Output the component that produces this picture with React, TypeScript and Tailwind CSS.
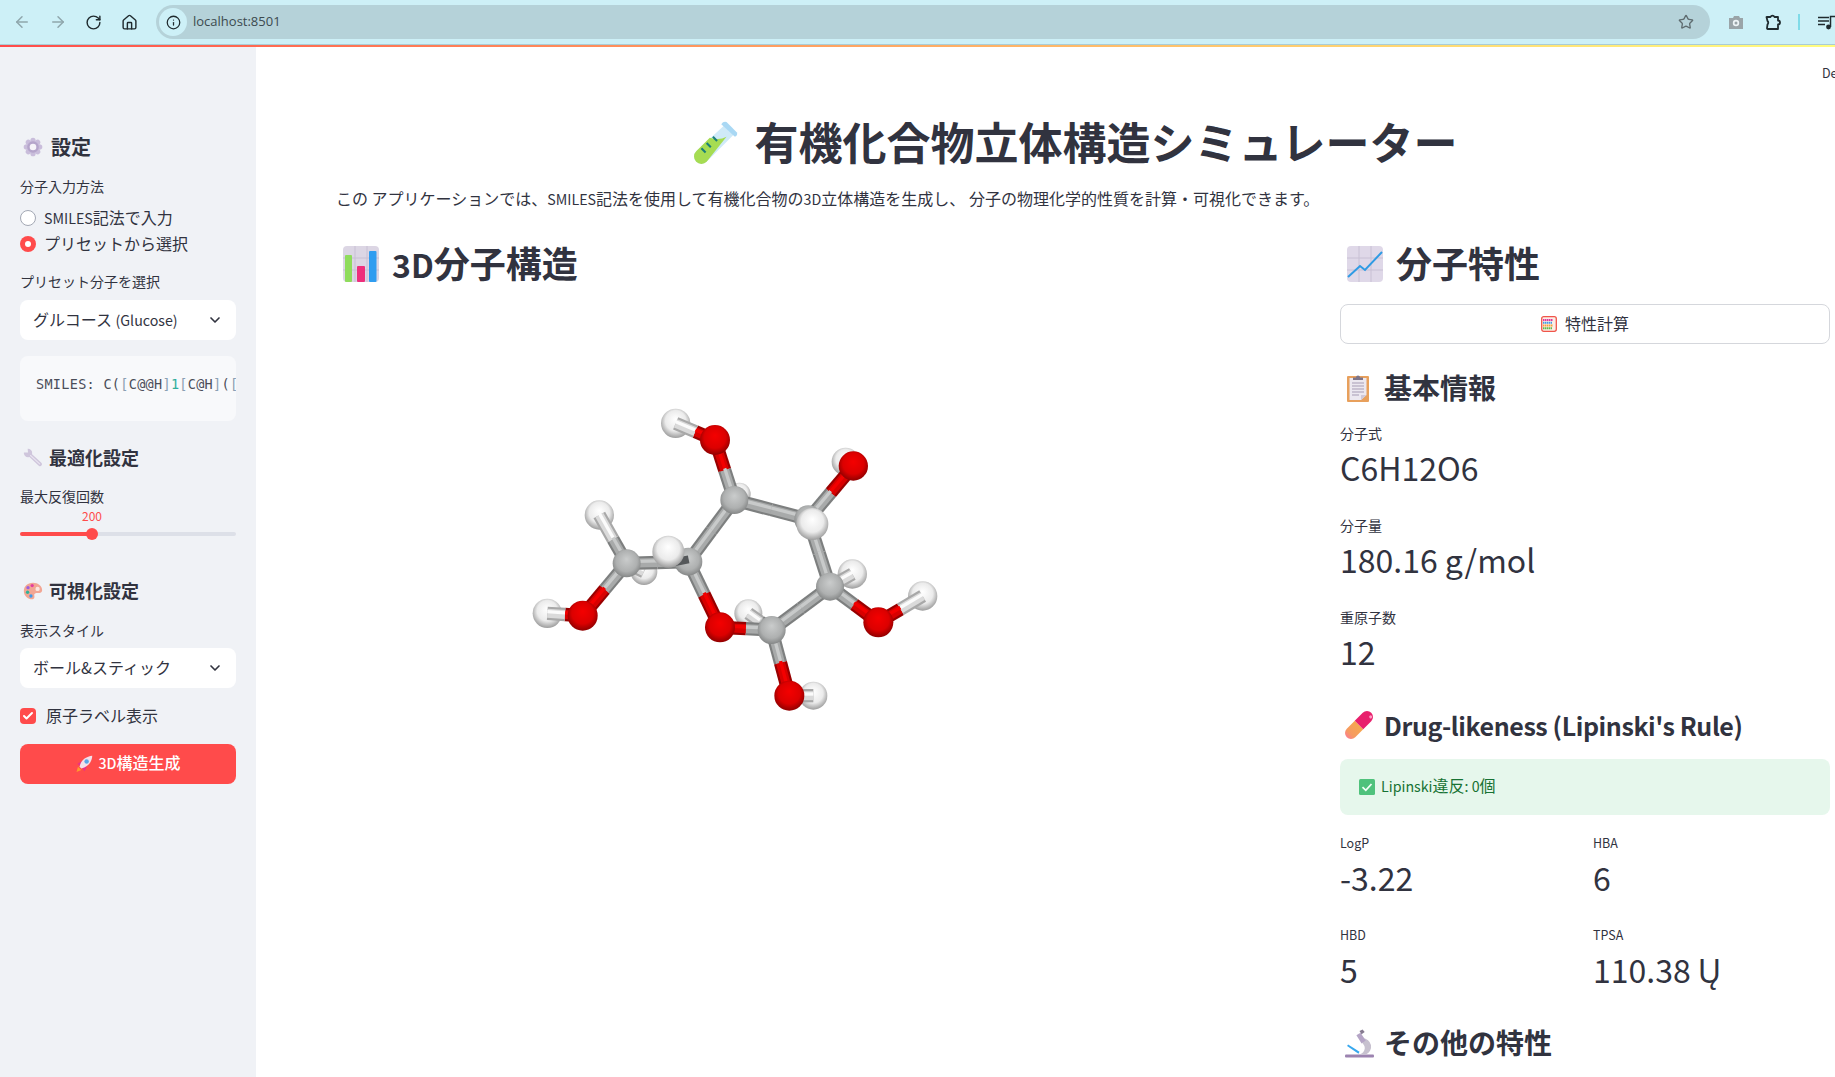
import React from 'react';
import { ArrowLeft, ArrowRight, RotateCw, House, Info, Star, ChevronDown, Check } from 'lucide-react';

// latin runs: the CJK font's latin is wider, so size it down a bit
const L = ({ children }: { children: React.ReactNode }) => <span className="text-[0.89em]">{children}</span>;

const TestTube = ({ className = '' }: { className?: string }) => (
  <svg viewBox="0 0 44 44" className={className}>
    <path d="M32 4 L41 13 L14 40 A6.4 6.4 0 0 1 4 30 Z" fill="#cfeaf8" />
    <path d="M33 16 L14 40 A6.4 6.4 0 0 1 4 30 L17 17 Q26 20 33 16 Z" fill="#a6dc52" />
    <path d="M14 22 l4 4 M9 27 l4 4 M20 16 l4 4" stroke="#1b7f79" strokeWidth="2" />
    <path d="M28 4 Q30 1 33 2 L43 12 Q44 15 41 16 Z" fill="#a9d8f4" />
  </svg>
);

const Gear = ({ className = '' }: { className?: string }) => (
  <svg viewBox="0 0 24 24" className={className}>
    {[0, 45, 90, 135, 180, 225, 270, 315].map((a) => (
      <ellipse key={a} cx="12" cy="4.6" rx="3.2" ry="3.8" fill="#c9bddb" transform={`rotate(${a} 12 12)`} />
    ))}
    <circle cx="12" cy="12" r="7" fill="#b5a5cb" />
    <circle cx="12" cy="12" r="4" fill="#f6f4f9" />
  </svg>
);

const Wrench = ({ className = '' }: { className?: string }) => (
  <svg viewBox="0 0 24 24" className={className}>
    <path d="M8 8 L20.500 19.500" stroke="#cfc6dc" strokeWidth="4.500" strokeLinecap="round" />
    <circle cx="6" cy="6" r="5" fill="#cfc6dc" />
    <path d="M5.500 0 L6 5.500 L0 5.500 L0 0 Z" fill="#f0f2f6" />
    <path d="M9 9 L20 19" stroke="#e9e4f0" strokeWidth="1.300" strokeLinecap="round" />
  </svg>
);

const Palette = ({ className = '' }: { className?: string }) => (
  <svg viewBox="0 0 24 24" className={className}>
    <path d="M12 2 C5 2 1 6.500 1 12 C1 18 6 22 11 22 C14 22 14 19 13.500 17.500 C13 15 15 14.500 18 14.500 C21 14.500 23 13.500 23 11 C23 6 18 2 12 2 Z" fill="#f2a694" />
    <circle cx="17.500" cy="9.500" r="2.600" fill="#fbe6df" />
    <circle cx="11" cy="5.500" r="2" fill="#e23fa0" />
    <circle cx="6" cy="8" r="2" fill="#9a5fe0" />
    <circle cx="5.500" cy="13.500" r="2" fill="#2fb39a" />
    <circle cx="9.500" cy="18" r="2" fill="#3f9ae8" />
  </svg>
);

const Rocket = ({ className = '' }: { className?: string }) => (
  <svg viewBox="0 0 24 24" className={className}>
    <path d="M2 22.500 L4 15.500 L8.500 20 Z" fill="#ff9a2e" />
    <path d="M3 12 L9 8 L8 15 Z M12.500 21.500 L16 15 L9 16 Z" fill="#e8308a" />
    <path d="M6 15.500 C8 7 14 2 23 1 C22.500 10 17 16 8.500 18 Z" fill="#f3dfe9" />
    <circle cx="15.500" cy="8.500" r="3" fill="#5aa6e8" />
  </svg>
);

const BarChart = ({ className = '' }: { className?: string }) => (
  <svg viewBox="0 0 36 36" className={className}>
    <rect x="0" y="0" width="36" height="36" rx="4" fill="#dcd6e4" />
    <path d="M12 0 V36 M24 0 V36 M0 12 H36 M0 24 H36" stroke="#c8c0d4" strokeWidth="1" />
    <rect x="2" y="9" width="7" height="27" rx="1" fill="#8fdc5c" />
    <rect x="14" y="20" width="8" height="16" rx="1" fill="#ee2f7c" />
    <rect x="26" y="5" width="7.500" height="31" rx="1" fill="#2f9df0" />
  </svg>
);

const LineChart = ({ className = '' }: { className?: string }) => (
  <svg viewBox="0 0 36 36" className={className}>
    <rect x="0" y="0" width="36" height="36" rx="4" fill="#dfd8e8" />
    <path d="M12 0 V36 M24 0 V36 M0 12 H36 M0 24 H36" stroke="#c8c0d4" strokeWidth="1" />
    <path d="M1 31 L13 20 L18 24 L35 6" fill="none" stroke="#2f9be4" strokeWidth="2" />
  </svg>
);

const Abacus = ({ className = '' }: { className?: string }) => (
  <svg viewBox="0 0 16 16" className={className}>
    <rect x="0.700" y="0.700" width="14.600" height="14.600" rx="2" fill="#fbeee6" stroke="#f0554a" strokeWidth="1.300" />
    <path d="M2 4 H12" stroke="#e2369a" strokeWidth="2" strokeDasharray="1.500 0.500" />
    <path d="M2 6.800 H11" stroke="#3f9ae8" strokeWidth="2" strokeDasharray="1.500 0.500" />
    <path d="M2 9.500 H12" stroke="#f5a13c" strokeWidth="2" strokeDasharray="1.500 0.500" />
    <path d="M2 12.200 H11" stroke="#5dbb4c" strokeWidth="2" strokeDasharray="1.500 0.500" />
  </svg>
);

const Clipboard = ({ className = '' }: { className?: string }) => (
  <svg viewBox="0 0 22 28" className={className}>
    <rect x="0" y="2" width="22" height="26" rx="1" fill="#e8a05c" />
    <path d="M2.500 4 H19.500 V21 L14 26 H2.500 Z" fill="#ece8f0" />
    <path d="M14 26 L14 21 H19.500 Z" fill="#cfc8d8" />
    <path d="M5 9 H17 M5 12 H17 M5 15 H17 M5 18 H17 M5 21 H12" stroke="#a79cb5" strokeWidth="1" />
    <path d="M6 6 V3.500 H9 A2 2 0 0 1 13 3.500 H16 V6 Z" fill="#7d7488" />
  </svg>
);

const Pill = ({ className = '' }: { className?: string }) => (
  <svg viewBox="0 0 28 28" className={className}>
    <defs>
      <linearGradient id="pill-end" x1="0" y1="0" x2="0" y2="1">
        <stop offset="0%" stopColor="#f5a84e" />
        <stop offset="70%" stopColor="#f69a62" />
        <stop offset="100%" stopColor="#fb7f8e" />
      </linearGradient>
    </defs>
    <g transform="rotate(45 14 14)">
      <path d="M8 14 H20 V25.300 A6 6 0 0 1 8 25.300 Z" fill="url(#pill-end)" />
      <path d="M8 14 H20 V2.700 A6 6 0 0 0 8 2.700 Z" fill="#e8206c" />
      <circle cx="16.500" cy="0" r="1.500" fill="#ff9cc4" />
    </g>
  </svg>
);

const CheckBox = ({ className = '' }: { className?: string }) => (
  <svg viewBox="0 0 16 16" className={className}>
    <rect x="0" y="0" width="16" height="16" rx="1.500" fill="#4fc27c" />
    <path d="M3.500 8.200 L6.800 11.300 L12.500 5" fill="none" stroke="#f4fff8" strokeWidth="1.800" />
  </svg>
);

const Microscope = ({ className = '' }: { className?: string }) => (
  <svg viewBox="0 0 28 28" className={className}>
    <rect x="0" y="24.500" width="28" height="3" rx="1" fill="#9c83b0" />
    <path d="M17 9 A8 8 0 0 1 20 24.500 H13 A6 6 0 0 0 17 14 Z" fill="#c7c1cf" />
    <path d="M2 16.500 L3 15 L14 22 L13 24 Z" fill="#37a8ee" />
    <path d="M11 6 L15 3.500 L20 11 L16 14 Z" fill="#b5a5c6" />
    <path d="M14 2 L17 0.500 L19 3 L16 5 Z" fill="#857a90" />
  </svg>
);

type AtomKind = 'C' | 'O' | 'H';

const bondColors: Record<AtomKind, [string, string, string]> = {
  C: ['#7d7f7f', '#a8aaaa', '#c8caca'],
  O: ['#980000', '#d80000', '#f40000'],
  H: ['#a8a8a8', '#dadada', '#fbfbfb'],
};

const atoms: Record<string, { x: number; y: number; r: number; kind: AtomKind }> = {
  H1: { x: 527, y: 100, r: 44, kind: 'H' },
  O1: { x: 645, y: 150, r: 45, kind: 'O' },
  C1: { x: 703, y: 330, r: 42, kind: 'C' },
  H0: { x: 718, y: 312, r: 34, kind: 'H' },
  O2: { x: 1060, y: 228, r: 44, kind: 'O' },
  H2: { x: 1037, y: 215, r: 42, kind: 'H' },
  H3: { x: 298, y: 375, r: 44, kind: 'H' },
  C2: { x: 380, y: 520, r: 42, kind: 'C' },
  H4: { x: 432, y: 545, r: 40, kind: 'H' },
  H5: { x: 505, y: 485, r: 48, kind: 'H' },
  C3: { x: 565, y: 515, r: 42, kind: 'C' },
  H6: { x: 142, y: 670, r: 44, kind: 'H' },
  O3: { x: 248, y: 677, r: 45, kind: 'O' },
  O4: { x: 660, y: 712, r: 45, kind: 'O' },
  C4: { x: 815, y: 720, r: 42, kind: 'C' },
  H7: { x: 745, y: 670, r: 42, kind: 'H' },
  C5: { x: 990, y: 590, r: 42, kind: 'C' },
  H8: { x: 1057, y: 552, r: 44, kind: 'H' },
  C6: { x: 925, y: 388, r: 42, kind: 'C' },
  H9: { x: 937, y: 402, r: 48, kind: 'H' },
  H10: { x: 1268, y: 618, r: 44, kind: 'H' },
  O5: { x: 1135, y: 697, r: 45, kind: 'O' },
  O6: { x: 868, y: 917, r: 45, kind: 'O' },
  H11: { x: 940, y: 917, r: 42, kind: 'H' },
};

// painted back to front
const scene: string[] = [
  'H0', 'H2', 'H4', 'H7', 'H8', 'H11', 'C2-H4', 'C4-H7', 'C5-H8', 'O2-H2',
  'O6-H11', 'H1', 'O1-H1', 'H3', 'C2-H3', 'H6', 'O3-H6', 'H10', 'O5-H10',
  'C1-O1', 'C6-O2', 'C3-O4', 'C4-O4', 'C4-O6', 'C2-O3', 'C5-O5',
  'O1', 'O2', 'O3', 'O5', 'O6',
  'C2-C3', 'C3-C1', 'C1-C6', 'C6-C5', 'C5-C4',
  'C2', 'C1', 'C6', 'C5', 'C4', 'C3', 'shade', 'O4', 'H5', 'H9',
];

const Bond = ({ a, b }: { a: string; b: string }) => {
  const p = atoms[a];
  const q = atoms[b];
  const mx = (p.x + q.x) / 2;
  const my = (p.y + q.y) / 2;
  const widths = [40, 27, 10];
  return (
    <g strokeLinecap="butt">
      {widths.map((w, i) => {
        const lift = i === 2 ? 5 : 0;
        return (
          <React.Fragment key={w}>
            <line x1={p.x} y1={p.y - lift} x2={mx} y2={my - lift} stroke={bondColors[p.kind][i]} strokeWidth={w} />
            <line x1={mx} y1={my - lift} x2={q.x} y2={q.y - lift} stroke={bondColors[q.kind][i]} strokeWidth={w} />
          </React.Fragment>
        );
      })}
    </g>
  );
};

const Molecule = () => (
  <svg viewBox="0 0 1380 1020" className="w-[460px] h-[340px]">
    <defs>
      <radialGradient id="atom-C" cx="50%" cy="45%" r="58%" fx="50%" fy="35%">
        <stop offset="0%" stopColor="#cacccc" />
        <stop offset="65%" stopColor="#aeb0b0" />
        <stop offset="100%" stopColor="#7f8181" />
      </radialGradient>
      <radialGradient id="atom-O" cx="50%" cy="45%" r="58%" fx="50%" fy="35%">
        <stop offset="0%" stopColor="#f40000" />
        <stop offset="62%" stopColor="#dc0000" />
        <stop offset="100%" stopColor="#860000" />
      </radialGradient>
      <radialGradient id="atom-H" cx="50%" cy="45%" r="58%" fx="50%" fy="35%">
        <stop offset="0%" stopColor="#ffffff" />
        <stop offset="60%" stopColor="#ebebeb" />
        <stop offset="100%" stopColor="#939393" />
      </radialGradient>
    </defs>
    {scene.map((item) => {
      if (item === 'shade') {
        return <line key={item} x1="525" y1="516" x2="566" y2="508" stroke="#55585a" strokeWidth="24" />;
      }
      if (item.includes('-')) {
        const [a, b] = item.split('-');
        return <Bond key={item} a={a} b={b} />;
      }
      const atom = atoms[item];
      return <circle key={item} cx={atom.x} cy={atom.y} r={atom.r} fill={`url(#atom-${atom.kind})`} />;
    })}
  </svg>
);

const BrowserBar = () => (
  <div className="h-[45px] shrink-0 bg-[#cdf0f7] border-b border-[#a9cdd6] flex items-center font-['Open_Sans','Noto_Sans',sans-serif]">
    <div className="w-[156px] shrink-0 flex items-center pl-[13px] gap-[18px]">
      <ArrowLeft size={18} className="text-[#8fa6ac]" />
      <ArrowRight size={18} className="text-[#8fa6ac]" />
      <RotateCw size={17} className="text-[#1f2a2e]" />
      <House size={17} className="ml-[1px] text-[#1f2a2e]" />
    </div>
    <div className="w-[1554px] h-[34px] rounded-full bg-[#b5d2d9] flex items-center pl-[3px] pr-[16px]">
      <div className="w-[28px] h-[28px] rounded-full bg-[#cdf0f7] flex items-center justify-center">
        <Info size={15} className="text-[#1f2a2e]" />
      </div>
      <span className="ml-[6px] text-[13px] text-[#3c4a4f]">localhost:8501</span>
      <Star size={16} className="ml-auto text-[#5f6c70]" />
    </div>
    <div className="flex-1 flex items-center pl-[18px] overflow-hidden">
      <svg viewBox="0 0 16 16" className="w-[16px] h-[16px] shrink-0">
        <path d="M1 4 H5 L6 2 H11 L12 4 H15 V15 H1 Z" fill="#9aa4a8" />
        <circle cx="8" cy="9" r="3.200" fill="#eef4f6" />
        <circle cx="8" cy="9" r="1.500" fill="#9aa4a8" />
      </svg>
      <svg viewBox="0 0 18 18" className="ml-[20px] w-[18px] h-[18px] shrink-0" fill="none" stroke="#1f2a2e" strokeWidth="1.800" strokeLinejoin="round">
        <path d="M2.500 4 H6.500 A2.200 2.200 0 0 1 10.500 4 H14 V7.500 A2 2 0 0 1 14 11.500 V16 H3.500 A1 1 0 0 1 3 15 L3.500 11.500 A2.400 2.400 0 0 0 3.500 8 Z" />
      </svg>
      <div className="ml-[16px] w-[1.500px] h-[16px] shrink-0 bg-[#7fdbe8]" />
      <svg viewBox="0 0 18 16" className="ml-[18px] w-[18px] h-[16px] shrink-0">
        <path d="M0 3.500 H11 M0 7 H11 M0 10.500 H7" stroke="#1f2a2e" strokeWidth="1.500" />
        <path d="M12.500 13 V2.500 H17" fill="none" stroke="#1f2a2e" strokeWidth="1.500" />
        <circle cx="10.500" cy="13" r="2.400" fill="#1f2a2e" />
      </svg>
    </div>
  </div>
);

const SideHeading = ({ icon, children, big = false }: { icon: React.ReactNode; children: React.ReactNode; big?: boolean }) => (
  <div className="h-[30px] flex items-center pl-[3px]">
    <div className="w-[20px] h-[20px] shrink-0">{icon}</div>
    <h3 className={big ? 'ml-[8px] text-[20px] font-bold' : 'ml-[6px] pb-[2px] text-[18px] font-bold'}>{children}</h3>
  </div>
);

const FieldLabel = ({ children, className = '' }: { children: React.ReactNode; className?: string }) => (
  <div className={`h-[20px] pb-[1px] flex items-center text-[14px] text-[#31333f] ${className}`}>{children}</div>
);

const SelectBox = ({ children, className = '' }: { children: React.ReactNode; className?: string }) => (
  <div className={`h-[40px] bg-white rounded-lg flex items-center justify-between pl-[13px] pr-[13px] text-[16px] ${className}`}>
    <span className="pb-[2px]">{children}</span>
    <ChevronDown size={16} strokeWidth={2.500} className="text-[#31333f]" />
  </div>
);

const Radio = ({ children, checked = false }: { children: React.ReactNode; checked?: boolean }) => (
  <div className="h-[26px] flex items-center">
    {checked ? (
      <div className="w-[16px] h-[16px] rounded-full bg-[#ff4b4b] flex items-center justify-center">
        <div className="w-[6px] h-[6px] rounded-full bg-white" />
      </div>
    ) : (
      <div className="w-[16px] h-[16px] rounded-full bg-white border border-[#a3a8b4]" />
    )}
    <span className="ml-[8px] pb-[2px] text-[16px]">{children}</span>
  </div>
);

const Sidebar = () => (
  <aside className="w-[256px] shrink-0 bg-[#f0f2f6] pl-[20px] pr-[20px] pt-[85px]">
    <SideHeading big icon={<Gear className="w-[20px] h-[20px]" />}>設定</SideHeading>
    <FieldLabel className="mt-[15px]">分子入力方法</FieldLabel>
    <div className="mt-[8px]">
      <Radio><L>SMILES</L>記法で入力</Radio>
      <Radio checked>プリセットから選択</Radio>
    </div>
    <FieldLabel className="mt-[15px]">プリセット分子を選択</FieldLabel>
    <SelectBox className="mt-[8px]">グルコース <L>(Glucose)</L></SelectBox>
    <div className="mt-[16px] h-[65px] bg-[#f8f9fb] rounded-lg pl-[16px] pt-[18px] overflow-hidden whitespace-nowrap font-['DejaVu_Sans_Mono',monospace] text-[13.500px] tracking-[0.3px] leading-[20px] text-[#4a4d59]">
      SMILES: C(<span className="text-[#8aa0b4]">[</span>C@@H<span className="text-[#8aa0b4]">]</span><span className="text-[#2fae9c]">1</span><span className="text-[#8aa0b4]">[</span>C@H<span className="text-[#8aa0b4]">]</span>(<span className="text-[#8aa0b4]">[</span>C@H
    </div>
    <div className="mt-[22px]">
      <SideHeading icon={<Wrench className="w-[20px] h-[20px]" />}>最適化設定</SideHeading>
    </div>
    <FieldLabel className="mt-[14px]">最大反復回数</FieldLabel>
    <div className="mt-[1px] h-[16px] pl-[62px] text-[12px] leading-[16px] text-[#ff4b4b]">200</div>
    <div className="mt-[2px] h-[16px] flex items-center">
      <div className="w-[72px] h-[4px] rounded-l-full bg-[#ff4b4b]" />
      <div className="flex-1 h-[4px] rounded-r-full bg-[#dde0e8]" />
      <div className="absolute ml-[66px] w-[12px] h-[12px] rounded-full bg-[#ff4b4b]" />
    </div>
    <div className="mt-[34px]">
      <SideHeading icon={<Palette className="w-[20px] h-[20px]" />}>可視化設定</SideHeading>
    </div>
    <FieldLabel className="mt-[15px]">表示スタイル</FieldLabel>
    <SelectBox className="mt-[7px]">ボール&スティック</SelectBox>
    <div className="mt-[16px] h-[24px] flex items-center">
      <div className="w-[16px] h-[16px] rounded bg-[#ff4b4b] flex items-center justify-center">
        <Check size={12} strokeWidth={4} className="text-white" />
      </div>
      <span className="ml-[10px] pb-[2px] text-[16px]">原子ラベル表示</span>
    </div>
    <button className="mt-[16px] w-full h-[40px] rounded-lg bg-[#ff4b4b] text-white text-[16px] font-medium flex items-center justify-center">
      <Rocket className="w-[18px] h-[18px] mr-[5px]" />
      <span className="pb-[4px]"><L>3D</L>構造生成</span>
    </button>
  </aside>
);

const Metric = ({ label, value, className = '' }: { label: React.ReactNode; value: string; className?: string }) => (
  <div className={`pb-[2px] ${className}`}>
    <div className="h-[22px] flex items-center text-[14px]">{label}</div>
    <div className="h-[46px] flex items-center text-[32px] leading-[46px]">{value}</div>
  </div>
);

const SubHeading = ({ icon, children, className = '' }: { icon: React.ReactNode; children: React.ReactNode; className?: string }) => (
  <div className={`h-[36px] flex items-center ${className}`}>
    <div className="w-[44px] shrink-0 pl-[5px]">{icon}</div>
    <h3 className="pb-[3px] text-[28px] font-semibold whitespace-nowrap">{children}</h3>
  </div>
);

const PropertiesColumn = () => (
  <div className="w-[490px] shrink-0">
    <div className="h-[48px] flex items-center pl-[7px]">
      <LineChart className="w-[36px] h-[36px]" />
      <h2 className="ml-[13px] pb-[5px] text-[36px] font-bold">分子特性</h2>
    </div>
    <button className="mt-[16px] w-full h-[40px] bg-white rounded-lg border border-[#d5d7dc] flex items-center justify-center text-[16px]">
      <Abacus className="w-[16px] h-[16px] mr-[8px]" />
      <span className="pb-[3px]">特性計算</span>
    </button>
    <SubHeading className="mt-[26px]" icon={<Clipboard className="w-[22px] h-[28px] ml-[2px]" />}>基本情報</SubHeading>
    <Metric className="mt-[16px]" label="分子式" value="C6H12O6" />
    <Metric className="mt-[22px]" label="分子量" value="180.16 g/mol" />
    <Metric className="mt-[22px]" label="重原子数" value="12" />
    <SubHeading className="mt-[31px]" icon={<Pill className="w-[28px] h-[28px]" />}>
      <span className="text-[25px] tracking-[-0.4px]">Drug-likeness (Lipinski's Rule)</span>
    </SubHeading>
    <div className="mt-[16px] h-[56px] rounded-lg bg-[#e6f7ec] flex items-center pl-[19px] text-[16px] text-[#177233]">
      <CheckBox className="w-[16px] h-[16px] mr-[6px]" />
      <span className="pb-[5px]"><L>Lipinski</L>違反<L>: 0</L>個</span>
    </div>
    <div className="mt-[17px] grid grid-cols-[253px_1fr] gap-y-[22px]">
      <Metric label={<L>LogP</L>} value="-3.22" />
      <Metric label={<L>HBA</L>} value="6" />
      <Metric label={<L>HBD</L>} value="5" />
      <Metric label={<L>TPSA</L>} value="110.38 Ų" />
    </div>
    <SubHeading className="mt-[31px]" icon={<Microscope className="w-[29px] h-[29px]" />}>その他の特性</SubHeading>
  </div>
);

export default function App() {
  return (
    <div className="w-[1835px] h-[1077px] overflow-hidden flex flex-col bg-white text-[#31333f] font-['Noto_Sans_CJK_JP','Noto_Sans',sans-serif]">
      <BrowserBar />
      <div className="h-[2px] shrink-0 bg-gradient-to-r from-[#ff4b4b] to-[#fffd80]" />
      <div className="flex flex-1 min-h-0">
        <Sidebar />
        <main className="relative flex-1 pl-[80px] pr-[5px] pt-[65px]">
          <div className="absolute top-[17px] left-[1566px] text-[12.500px] whitespace-nowrap">Deploy</div>
          <div className="h-[60px] flex items-center justify-center pr-[16px]">
            <TestTube className="w-[46px] h-[46px] mt-[2px]" />
            <h1 className="ml-[16px] pb-[2px] text-[44px] font-bold leading-[60px] whitespace-nowrap">有機化合物立体構造シミュレーター</h1>
          </div>
          <p className="mt-[14px] text-[16px] leading-[24px]">
            この アプリケーションでは、<L>SMILES</L>記法を使用して有機化合物の<L>3D</L>立体構造を生成し、 分子の物理化学的性質を計算・可視化できます。
          </p>
          <div className="mt-[29px] flex justify-between">
            <div>
              <div className="h-[48px] flex items-center pl-[7px]">
                <BarChart className="w-[36px] h-[36px]" />
                <h2 className="ml-[13px] pb-[5px] text-[36px] font-bold"><L>3D</L>分子構造</h2>
              </div>
              <div className="mt-[102px] ml-[164px]">
                <Molecule />
              </div>
            </div>
            <PropertiesColumn />
          </div>
        </main>
      </div>
    </div>
  );
}
